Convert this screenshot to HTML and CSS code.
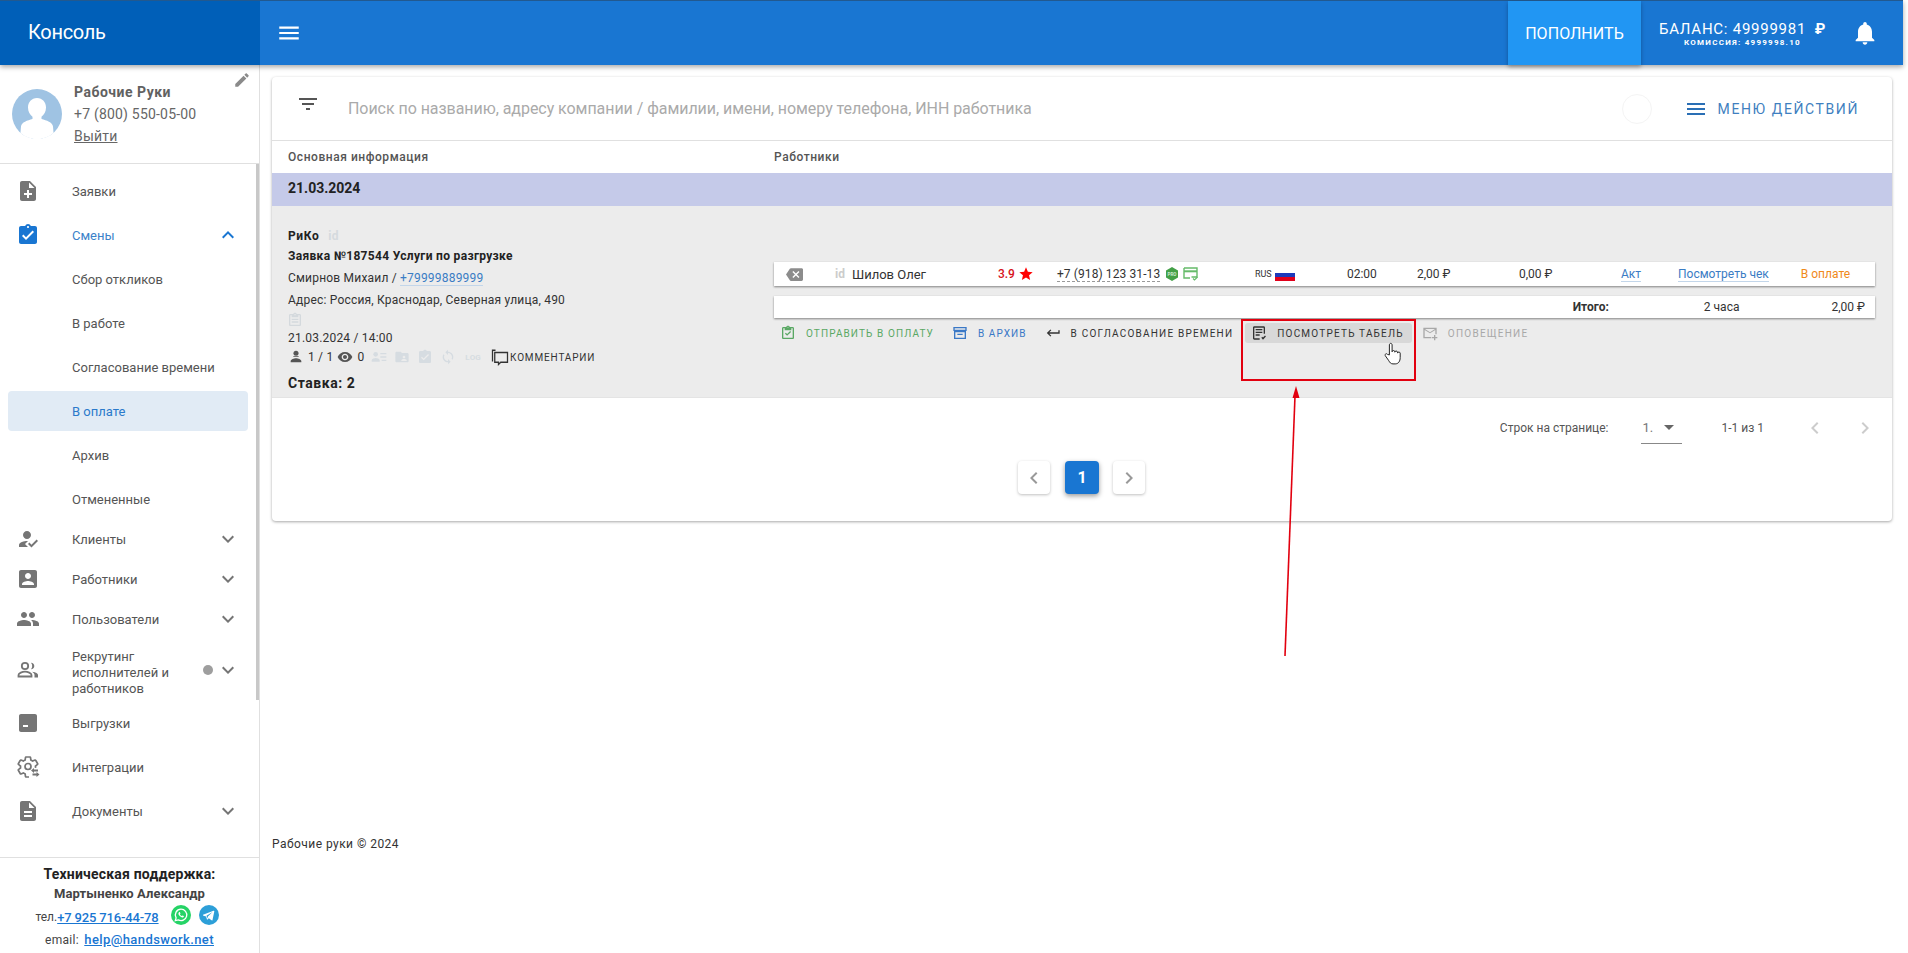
FILE: index.html
```html
<!DOCTYPE html>
<html lang="ru">
<head>
<meta charset="utf-8">
<title>Консоль</title>
<link rel="stylesheet" href="styles.css">
</head>
<body>
<div class="app">
  <header class="topbar">
    <div class="brand">Консоль</div>
    <div class="bar">
      <svg class="ic burger" viewBox="0 0 24 24"><path d="M3 18h18v-2H3v2zm0-5h18v-2H3v2zm0-7v2h18V6H3z"/></svg>
      <div class="spacer"></div>
      <button class="topup">ПОПОЛНИТЬ</button>
      <div class="balance">
        <div class="bal-main">БАЛАНС: 49999981 <span class="rub">₽</span></div>
        <div class="bal-sub">КОМИССИЯ: 4999998.10</div>
      </div>
      <svg class="ic bell" viewBox="0 0 24 24"><path d="M12 22c1.1 0 2-.9 2-2h-4c0 1.1.89 2 2 2zm6-6v-5c0-3.07-1.64-5.64-4.5-6.32V4c0-.83-.67-1.5-1.5-1.5s-1.5.67-1.5 1.5v.68C7.63 5.36 6 7.92 6 11v5l-2 2v1h16v-1l-2-2z"/></svg>
    </div>
  </header>
  <div class="body">
    <aside class="sidebar">
      <div class="profile">
        <svg class="avatar" viewBox="0 0 50 50"><circle cx="25" cy="25" r="25" fill="#9fc3e3"/><path d="M25 9c5.5 0 9 4.300 9 9.500 0 4-2 7.500-4.500 9.200v2.300c5 1.500 11 3 11.500 7.500 .2 2.500 .5 5 .5 6.500a25 25 0 0 1-33 0c0-1.500 .3-4 .5-6.500 .5-4.500 6.500-6 11.500-7.500v-2.300C18 26 16 22.500 16 18.500 16 13.300 19.500 9 25 9z" fill="#fff"/></svg>
        <div class="p-info">
          <div class="p-name">Рабочие Руки</div>
          <div class="p-phone">+7 (800) 550-05-00</div>
          <a class="p-exit">Выйти</a>
        </div>
        <svg class="ic p-edit" viewBox="0 0 24 24"><path d="M3 17.250V21h3.750L17.810 9.940l-3.750-3.750L3 17.250zM20.710 7.040c.39-.39.39-1.020 0-1.410l-2.340-2.340c-.39-.39-1.020-.39-1.410 0l-1.830 1.830 3.750 3.750 1.830-1.830z"/></svg>
      </div>
      <nav class="nav">
        <div class="item"><svg class="ic n-ic" viewBox="0 0 24 24"><path d="M14 2H6c-1.100 0-1.990.9-1.990 2L4 20c0 1.100.89 2 1.990 2H18c1.100 0 2-.9 2-2V8l-6-6zm2 14h-3v3h-2v-3H8v-2h3v-3h2v3h3v2zm-3-7V3.500L18.500 9H13z"/></svg><span>Заявки</span></div>
        <div class="item on"><svg class="ic n-ic" viewBox="0 0 24 24"><path d="M19 3h-4.180C14.400 1.840 13.300 1 12 1c-1.300 0-2.400.84-2.820 2H5c-1.100 0-2 .9-2 2v14c0 1.100.9 2 2 2h14c1.100 0 2-.9 2-2V5c0-1.100-.9-2-2-2zm-7 0c.55 0 1 .45 1 1s-.45 1-1 1-1-.45-1-1 .45-1 1-1zm-2 14l-4-4 1.410-1.410L10 14.170l6.590-6.590L18 9l-8 8z"/></svg><span>Смены</span><svg class="ic chev" viewBox="0 0 24 24"><path d="M12 8l-6 6 1.410 1.410L12 10.830l4.590 4.580L18 14z"/></svg></div>
        <div class="item sub"><span>Сбор откликов</span></div>
        <div class="item sub"><span>В работе</span></div>
        <div class="item sub"><span>Согласование времени</span></div>
        <div class="item sub active"><span>В оплате</span></div>
        <div class="item sub"><span>Архив</span></div>
        <div class="item sub"><span>Отмененные</span></div>
        <div class="item short first"><svg class="ic n-ic" viewBox="0 0 24 24"><path d="M9 17l3-2.940c-.39-.04-.68-.06-1-.06-2.670 0-8 1.340-8 4v2h9l-3-3zm2-5c2.210 0 4-1.800 4-4 0-2.210-1.790-4-4-4s-4 1.790-4 4c0 2.200 1.790 4 4 4zm4.470 8.500L12 17l1.400-1.410 2.070 2.080 5.130-5.170 1.400 1.410z"/></svg><span>Клиенты</span><svg class="ic chev" viewBox="0 0 24 24"><path d="M7.410 8.590L12 13.170l4.590-4.580L18 10l-6 6-6-6z"/></svg></div>
        <div class="item short"><svg class="ic n-ic" viewBox="0 0 24 24"><path d="M3 5v14c0 1.100.89 2 2 2h14c1.100 0 2-.9 2-2V5c0-1.100-.9-2-2-2H5c-1.110 0-2 .9-2 2zm12 4c0 1.660-1.340 3-3 3s-3-1.340-3-3 1.340-3 3-3 3 1.340 3 3zm-9 8c0-2 4-3.100 6-3.100s6 1.100 6 3.100v1H6v-1z"/></svg><span>Работники</span><svg class="ic chev" viewBox="0 0 24 24"><path d="M7.410 8.590L12 13.170l4.590-4.580L18 10l-6 6-6-6z"/></svg></div>
        <div class="item short"><svg class="ic n-ic" viewBox="0 0 24 24"><path d="M16 11c1.660 0 2.990-1.340 2.990-3S17.660 5 16 5c-1.660 0-3 1.340-3 3s1.340 3 3 3zm-8 0c1.660 0 2.990-1.340 2.990-3S9.660 5 8 5C6.340 5 5 6.340 5 8s1.340 3 3 3zm0 2c-2.330 0-7 1.170-7 3.500V19h14v-2.500c0-2.330-4.670-3.500-7-3.500zm8 0c-.29 0-.62.02-.97.05 1.160.84 1.970 1.970 1.970 3.450V19h6v-2.500c0-2.330-4.670-3.500-7-3.500z"/></svg><span>Пользователи</span><svg class="ic chev" viewBox="0 0 24 24"><path d="M7.410 8.590L12 13.170l4.590-4.580L18 10l-6 6-6-6z"/></svg></div>
        <div class="item tall"><svg class="ic n-ic" viewBox="0 0 24 24"><circle cx="9" cy="8" r="3.200" fill="none" stroke="#757575" stroke-width="1.800"/><path d="M15 4.800c2 0 3.300 1.400 3.300 3.200s-1.300 3.200-3.300 3.200c.8-1 1.200-2 1.200-3.200s-.4-2.200-1.200-3.200z"/><path d="M2.500 18.500v-1.500c0-2 4-3.300 6.500-3.300s6.500 1.300 6.500 3.300v1.500z" fill="none" stroke="#757575" stroke-width="1.800"/><path d="M16 13.700c2.800.3 6 1.300 6 3.300v2.400h-3.500V17c0-1.300-1-2.400-2.500-3.300z"/></svg><span class="wrap">Рекрутинг исполнителей и работников</span><i class="dot"></i><svg class="ic chev" viewBox="0 0 24 24"><path d="M7.410 8.590L12 13.170l4.590-4.580L18 10l-6 6-6-6z"/></svg></div>
        <div class="item"><svg class="ic n-ic" viewBox="0 0 24 24"><path d="M5 3h14c1.100 0 2 .9 2 2v14c0 1.100-.9 2-2 2H5c-1.100 0-2-.9-2-2V5c0-1.100.9-2 2-2zm2 11v2h5v-2H7z" fill-rule="evenodd"/></svg><span>Выгрузки</span></div>
        <div class="item"><svg class="ic n-ic" viewBox="0 0 24 24"><path fill="none" stroke="#757575" stroke-width="1.700" d="M19.430 12.980c.04-.32.07-.64.07-.98 0-.34-.03-.66-.07-.98l2.110-1.650c.19-.15.24-.42.12-.64l-2-3.460c-.12-.22-.39-.3-.61-.22l-2.490 1c-.52-.4-1.080-.73-1.690-.98l-.38-2.650C14.460 2.180 14.250 2 14 2h-4c-.25 0-.46.18-.49.42l-.38 2.650c-.61.25-1.170.59-1.690.98l-2.490-1c-.23-.09-.49 0-.61.22l-2 3.460c-.13.22-.07.49.12.64l2.110 1.650c-.04.32-.07.65-.07.98 0 .33.03.66.07.98l-2.110 1.650c-.19.15-.24.42-.12.64l2 3.460c.12.22.39.3.61.22l2.490-1c.52.4 1.080.73 1.690.98l.38 2.650c.03.24.24.42.49.42h3"/><circle cx="12" cy="11.500" r="3" fill="none" stroke="#757575" stroke-width="1.700"/><path d="M15 15.500l3-2.500v1.600h4v1.800h-4V18zM23.500 19.500l-3 2.500v-1.600h-4v-1.800h4V17z"/></svg><span>Интеграции</span></div>
        <div class="item"><svg class="ic n-ic" viewBox="0 0 24 24"><path d="M14 2H6c-1.100 0-1.990.9-1.990 2L4 20c0 1.100.89 2 1.990 2H18c1.100 0 2-.9 2-2V8l-6-6zm2 16H8v-2h8v2zm0-4H8v-2h8v2zm-3-5V3.500L18.500 9H13z"/></svg><span>Документы</span><svg class="ic chev" viewBox="0 0 24 24"><path d="M7.410 8.590L12 13.170l4.590-4.580L18 10l-6 6-6-6z"/></svg></div>
        <div class="thumb"></div>
      </nav>
      <div class="support">
        <div class="s-title">Техническая поддержка:</div>
        <div class="s-name">Мартыненко Александр</div>
        <div class="s-tel">тел.<a class="s-link">+7 925 716-44-78</a>
          <svg class="s-ic" viewBox="0 0 20 20"><circle cx="10" cy="10" r="10" fill="#25d366"/><path d="M10 4.200a5.700 5.700 0 0 0-4.900 8.600l-.8 2.900 3-.8A5.700 5.700 0 1 0 10 4.200z" fill="none" stroke="#fff" stroke-width="1.300"/><path d="M8 7.300c-.9.800-.7 2.100.3 3.300s2.400 2.200 3.500 1.900c.9-.2 1.300-1.100 1-1.400l-1.300-.7-.7.700c-.8-.3-1.500-1-1.900-1.900l.6-.7-.6-1.300c-.2-.2-.6-.1-.9.100z" fill="#fff"/></svg>
          <svg class="s-ic" viewBox="0 0 20 20"><circle cx="10" cy="10" r="10" fill="#2d9fd8"/><path d="M4 9.800l10.500-4.100c.5-.2.900.1.800.8l-1.800 8.400c-.1.600-.5.700-1 .4l-2.700-2-1.300 1.300c-.2.200-.4.200-.5-.1l-.9-3-2.600-.8c-.6-.2-.6-.6-.5-.7zm3.500 1 6-3.700-4.600 4.400-.3 2z" fill="#fff" fill-rule="evenodd"/></svg>
        </div>
        <div class="s-mail">email: <a class="s-link">help@handswork.net</a></div>
      </div>
    </aside>
    <main class="main">
      <section class="card">
        <div class="search">
          <svg class="ic f-ic" viewBox="0 0 24 24"><path d="M10 18h4v-2h-4v2zM3 6v2h18V6H3zm3 7h12v-2H6v2z"/></svg>
          <div class="placeholder">Поиск по названию, адресу компании / фамилии, имени, номеру телефона, ИНН работника</div>
          <div class="ghost"></div>
          <div class="action-menu">
            <svg class="ic" viewBox="0 0 24 24"><path d="M3 18h18v-2H3v2zm0-5h18v-2H3v2zm0-7v2h18V6H3z"/></svg>
            <span>МЕНЮ ДЕЙСТВИЙ</span>
          </div>
        </div>
        <div class="heads"><div class="h-left">Основная информация</div><div>Работники</div></div>
        <div class="date-row">21.03.2024</div>
        <div class="group">
          <div class="g-left">
            <div class="g-co"><b>РиКо</b><span class="g-id">id</span></div>
            <div class="g-order">Заявка №187544 Услуги по разгрузке</div>
            <div class="g-line">Смирнов Михаил / <a class="g-tel">+79999889999</a></div>
            <div class="g-line">Адрес: Россия, Краснодар, Северная улица, 490</div>
            <svg class="g-clip" viewBox="0 0 24 24"><path d="M19 3h-4.180C14.400 1.840 13.300 1 12 1c-1.300 0-2.400.84-2.820 2H5c-1.100 0-2 .9-2 2v14c0 1.100.9 2 2 2h14c1.100 0 2-.9 2-2V5c0-1.100-.9-2-2-2zm-7 0c.55 0 1 .45 1 1s-.45 1-1 1-1-.45-1-1 .45-1 1-1zm7 16H5V5h2v3h10V5h2v14zM7 10h10v2H7zm0 4h10v2H7z"/></svg>
            <div class="g-line g-when">21.03.2024 / 14:00</div>
            <div class="g-icons">
              <svg class="mi dark" viewBox="0 0 24 24"><circle cx="12" cy="6.500" r="3.800"/><path d="M8 10.500h8v1H8zM4 20v-2c0-2.800 5-4.300 8-4.300s8 1.500 8 4.300v2z"/></svg>
              <span>1 / 1</span>
              <svg class="mi dark" viewBox="0 0 24 24"><path d="M12 4.500C7 4.500 2.730 7.610 1 12c1.730 4.390 6 7.500 11 7.500s9.270-3.110 11-7.500c-1.730-4.390-6-7.500-11-7.500zM12 17c-2.760 0-5-2.240-5-5s2.240-5 5-5 5 2.240 5 5-2.240 5-5 5zm0-8c-1.660 0-3 1.340-3 3s1.340 3 3 3 3-1.340 3-3-1.340-3-3-3z"/></svg>
              <span>0</span>
              <svg class="mi faint" viewBox="0 0 24 24"><circle cx="7" cy="8" r="3.500"/><path d="M1 19v-2c0-2.500 4-3.500 6-3.500s6 1 6 3.500v2zM14 6h9v2h-9zM14 11h9v2h-9zM16 16h7v2h-7z"/></svg>
              <svg class="mi faint" viewBox="0 0 24 24"><path d="M10 4H4c-1.100 0-2 .9-2 2v12c0 1.100.9 2 2 2h16c1.100 0 2-.9 2-2V8c0-1.100-.9-2-2-2h-8l-2-2zm5 6c1.100 0 2 .9 2 2s-.9 2-2 2-2-.9-2-2 .9-2 2-2zm-4 7c0-1.300 2.700-2 4-2s4 .7 4 2v1h-8z" fill-rule="evenodd"/></svg>
              <svg class="mi faint" viewBox="0 0 24 24"><path d="M19 3h-4.180C14.400 1.840 13.300 1 12 1c-1.300 0-2.400.84-2.820 2H5c-1.100 0-2 .9-2 2v14c0 1.100.9 2 2 2h14c1.100 0 2-.9 2-2V5c0-1.100-.9-2-2-2zm-9 14l-4-4 1.410-1.410L10 14.170l6.590-6.590L18 9l-8 8z"/></svg>
              <svg class="mi faint" viewBox="0 0 24 24"><path d="M12 4V1L8 5l4 4V6c3.310 0 6 2.690 6 6 0 1.010-.25 1.970-.7 2.800l1.460 1.460C19.540 15.030 20 13.570 20 12c0-4.420-3.580-8-8-8zm0 14c-3.310 0-6-2.690-6-6 0-1.010.25-1.970.7-2.800L5.240 7.740C4.460 8.970 4 10.430 4 12c0 4.420 3.580 8 8 8v3l4-4-4-4v3z"/></svg>
              <span class="g-log">LOG</span>
              <svg class="mi comm" viewBox="0 0 24 24"><path d="M6 3H2v15" fill="none" stroke="#333" stroke-width="1.700"/><path d="M5 6h17v13h-9l-3 3v-3H5z" fill="none" stroke="#333" stroke-width="1.700"/></svg>
              <span class="g-comm">КОММЕНТАРИИ</span>
            </div>
            <div class="g-rate">Ставка: 2</div>
          </div>
          <div class="g-right">
            <div class="worker">
              <svg class="w-back" viewBox="0 0 24 24"><path d="M22 3H7c-.69 0-1.230.35-1.590.88L0 12l5.410 8.110c.36.53.9.89 1.590.89h15c1.100 0 2-.9 2-2V5c0-1.100-.9-2-2-2zm-3 12.590L17.590 17 14 13.410 10.410 17 9 15.590 12.590 12 9 8.410 10.410 7 14 10.590 17.590 7 19 8.410 15.410 12 19 15.590z"/></svg>
              <span class="w-id">id</span>
              <span class="w-name">Шилов Олег</span>
              <span class="w-rate">3.9 <svg class="w-star" viewBox="0 0 24 24"><path d="M12 17.270L18.180 21l-1.640-7.030L22 9.240l-7.190-.61L12 2 9.190 8.630 2 9.240l5.460 4.730L5.820 21z"/></svg></span>
              <span class="w-tel"><span class="w-dash">+7 (918) 123 31-13</span>
                <svg class="w-pro" viewBox="0 0 14 14"><path d="M7 0l6 3.500v7L7 14l-6-3.500v-7z" fill="#43a047"/><text x="7" y="8.800" class="w-pro-t">PRO</text></svg>
                <svg class="w-card" viewBox="0 0 16 14"><path d="M1 1h13v9H8.500M1 1v10h6" fill="none" stroke="#66bb6a" stroke-width="1.400"/><rect x="1" y="3.300" width="13" height="2" fill="#66bb6a"/><path d="M10 11.500l1.500 1.500 3-3" fill="none" stroke="#66bb6a" stroke-width="1.100"/></svg>
              </span>
              <span class="w-rus">RUS<i class="flag"></i></span>
              <span class="w-time">02:00</span>
              <span class="w-sum">2,00 ₽</span>
              <span class="w-zero">0,00 ₽</span>
              <a class="w-link w-act">Акт</a>
              <a class="w-link w-check">Посмотреть чек</a>
              <span class="w-status">В оплате</span>
            </div>
            <div class="total">
              <b>Итого:</b><span class="t-h">2 часа</span><span class="t-s">2,00 ₽</span>
            </div>
            <div class="actions">
              <div class="act green"><svg class="a-ic" viewBox="0 0 24 24"><path d="M19 3h-4.180C14.400 1.840 13.300 1 12 1c-1.300 0-2.400.84-2.820 2H5c-1.100 0-2 .9-2 2v14c0 1.100.9 2 2 2h14c1.100 0 2-.9 2-2V5c0-1.100-.9-2-2-2zm-7-.25c.41 0 .75.34.75.75s-.34.75-.75.75-.75-.34-.75-.75.34-.75.75-.75zM19 19H5V5h2v3h10V5h2v14zm-2.400-8.500l-1.400-1.400-4.500 4.500-1.900-1.900L7.400 13l3.300 3.300z"/></svg>Отправить в оплату</div>
              <div class="act blue"><svg class="a-ic" viewBox="0 0 24 24"><path d="M2 3h20v6H2zm2 2v2h16V5zM3 9h18v12H3zm2 2v8h14v-8zm3 2h8v2H8z" fill-rule="evenodd"/></svg>В архив</div>
              <div class="act dark"><svg class="a-ic" viewBox="0 0 24 24"><path d="M22 8v5H6.500l3 3-1.400 1.400L2.700 12l5.400-5.400 1.400 1.400-3 3H20V8z"/></svg>В согласование времени</div>
              <div class="act dark hover"><svg class="a-ic" viewBox="0 0 24 24"><path d="M5 2h14c1.100 0 2 .9 2 2v9h-2V4H5v16h8v2H5c-1.100 0-2-.9-2-2V4c0-1.100.9-2 2-2zm2 4h10v2H7zm0 4h10v2H7zm0 4h6v2H7zm8.500 5l1.400-1.400 1.100 1.100 3-3 1.400 1.400L18 22.100z"/></svg>Посмотреть табель</div>
              <div class="act mute"><svg class="a-ic" viewBox="0 0 24 24"><path d="M2 4h20v10h-2V7.500l-8 5-8-5V18h10v2H2zm2.500 2l7.500 4.700L19.500 6zM18 15h2v3h3v2h-3v3h-2v-3h-3v-2h3z" fill-rule="evenodd"/></svg>Оповещение</div>
            </div>
          </div>
        </div>
        <div class="pager">
          <span class="pg-label">Строк на странице:</span>
          <span class="pg-select"><span>1.</span><i class="caret"></i></span>
          <span class="pg-range">1-1 из 1</span>
          <svg class="ic pg-nav" viewBox="0 0 24 24"><path d="M15.410 7.410L14 6l-6 6 6 6 1.410-1.410L10.830 12z"/></svg>
          <svg class="ic pg-nav" viewBox="0 0 24 24"><path d="M10 6L8.590 7.410 13.170 12l-4.580 4.590L10 18l6-6z"/></svg>
        </div>
        <div class="pages">
          <button class="pg-btn"><svg class="ic" viewBox="0 0 24 24"><path d="M15.410 7.410L14 6l-6 6 6 6 1.410-1.410L10.830 12z"/></svg></button>
          <button class="pg-btn cur">1</button>
          <button class="pg-btn"><svg class="ic" viewBox="0 0 24 24"><path d="M10 6L8.590 7.410 13.170 12l-4.580 4.590L10 18l6-6z"/></svg></button>
        </div>
      </section>
      <footer class="foot">Рабочие руки © 2024</footer>
    </main>
  </div>
  <div class="note-box"></div>
  <svg class="note-arrow" viewBox="0 0 30 280"><path d="M4 272L14 12" stroke="#e2000f" stroke-width="1.600" fill="none"/><path d="M15 2l-3.500 12h7z" fill="#e2000f"/></svg>
  <svg class="note-hand" viewBox="0 0 20 26"><path d="M6 14V3c0-2.400 3-2.400 3 0v7.500c0-1.800 3-1.800 3 0v.5c0-1.700 3-1.700 3 0v1c0-1.500 3-1.500 3 0v5c0 4-2 7-5.500 7H10c-2.500 0-3.500-1.500-5-4L1.500 15c-1-1.800 1.300-3.300 2.500-1.500z" fill="#fff" stroke="#222" stroke-width="1.100"/></svg>
</div>
</body>
</html>
```

FILE: styles.css
```css
* { box-sizing: border-box; }
html, body { margin: 0; height: 953px; overflow: hidden; background: #fff; }
body { font-family: Roboto, "Liberation Sans", sans-serif; color: #333; }
.app { position: relative; height: 953px; display: flex; flex-direction: column; padding-right: 5px; }
.ic { width: 24px; height: 24px; fill: currentColor; flex: none; display: block; }

.topbar { height: 65px; flex: none; display: flex; border-top: 1px solid #22598f; box-shadow: 0 2px 5px rgba(0,0,0,.35); position: relative; z-index: 2; color: #fff; }
.brand { width: 260px; background: #005fb8; font-size: 20px; letter-spacing: -.3px; padding-left: 28px; line-height: 63px; }
.bar { flex: 1; background: #1976d2; display: flex; align-items: center; padding-left: 16px; }
.burger { width: 26px; height: 26px; }
.spacer { flex: 1; }
.topup { width: 133px; height: 64px; border: 0; background: #2196f3; color: #fff; font: 16px Roboto, sans-serif; letter-spacing: .05px; box-shadow: 0 2px 4px rgba(0,0,0,.3); }
.balance { width: 212px; padding-left: 18px; }
.bal-main { font-size: 15px; letter-spacing: .75px; line-height: 18px; white-space: nowrap; }
.rub { font-weight: 700; margin-left: 4px; }
.bal-sub { font-size: 8px; font-weight: 700; letter-spacing: 1.25px; line-height: 9px; padding-left: 25px; white-space: nowrap; }
.bell { width: 28px; height: 28px; margin-right: 24px; margin-left: -2px; }

.body { flex: 1; display: flex; min-height: 0; }
.sidebar { width: 260px; flex: none; display: flex; flex-direction: column; border-right: 1px solid #e0e0e0; }
.profile { height: 99px; flex: none; border-bottom: 1px solid #e0e0e0; display: flex; padding: 24px 0 0 12px; position: relative; font-size: 14px; letter-spacing: .2px; color: #666; }
.avatar { width: 50px; height: 50px; flex: none; }
.p-info { margin-left: 12px; line-height: 22px; margin-top: -8px; }
.p-name { font-weight: 700; letter-spacing: .5px; color: #616161; }
.p-exit { text-decoration: underline; }
.p-edit { position: absolute; right: 8px; top: 6px; width: 18px; height: 18px; color: #8a8a8a; }

.nav { flex: 1; position: relative; overflow: hidden; padding-top: 5px; padding-right: 3px; }
.item { height: 44px; display: flex; align-items: center; padding-left: 16px; font-size: 13px; color: #555; position: relative; }
.item.short { height: 40px; }
.item.first { margin-top: -2px; }
.item.tall { height: 62px; line-height: 16px; }
.item > span { margin-left: 32px; }
.item.sub > span { margin-left: 56px; }
.n-ic { color: #757575; }
.item .wrap { width: 110px; margin-top: 5px; }
.chev { position: absolute; left: 216px; top: 50%; margin-top: -12px; color: #757575; }
.on, .on .n-ic, .on .chev { color: #1976d2; }
.on span { color: #3b82c9; }
.sub.active { margin: 2px 8px; padding-left: 8px; height: 40px; background: #e1ebf5; border-radius: 4px; color: #2b7acb; }
.dot { position: absolute; left: 203px; top: 50%; margin-top: -5px; width: 10px; height: 10px; border-radius: 50%; background: #9e9e9e; }
.thumb { position: absolute; right: 0; top: 0; width: 3px; height: 536px; background: #c8c8c8; }

.support { height: 96px; flex: none; border-top: 1px solid #e0e0e0; text-align: center; font-size: 12px; letter-spacing: .5px; color: #444; padding-top: 7px; }
.s-title { font-size: 14px; font-weight: 700; color: #222; letter-spacing: .2px; line-height: 18px; }
.s-name { font-weight: 700; font-size: 13px; line-height: 22px; color: #444; letter-spacing: .1px; }
.s-tel { display: flex; align-items: center; justify-content: center; height: 22px; margin-top: 1px; letter-spacing: 0; padding-left: 3px; }
.s-link { color: #1976d2; text-decoration: underline; font-weight: 500; }
.s-tel .s-link { font-size: 13px; margin-right: 12px; letter-spacing: -.15px; }
.s-ic { width: 20px; height: 20px; margin-right: 8px; margin-top: -4px; }
.s-mail { line-height: 24px; letter-spacing: .3px; }
.s-mail .s-link { font-size: 13px; margin-left: 2px; letter-spacing: .4px; }

.main { flex: 1; padding: 12px 11px 0 12px; display: flex; flex-direction: column; min-width: 0; }
.card { height: 444px; flex: none; border-radius: 4px; box-shadow: 0 1px 3px rgba(0,0,0,.35); background: #fff; }
.search { height: 64px; display: flex; align-items: center; padding-left: 24px; border-bottom: 1px solid #e0e0e0; position: relative; }
.f-ic { color: #555; margin-top: -10px; }
.placeholder { margin-left: 28px; font-size: 16px; letter-spacing: -.05px; color: #aaa; flex: 1; white-space: nowrap; }
.ghost { width: 30px; height: 30px; border-radius: 50%; border: 1px solid #f4f4f4; margin-right: 32px; }
.action-menu { display: flex; align-items: center; gap: 10px; margin-right: 33px; color: #3f7fc0; font-size: 14px; letter-spacing: 1.6px; }
.action-menu .ic { color: #2a6fb5; }

.heads { height: 32px; display: flex; align-items: center; padding-left: 16px; font-size: 12px; font-weight: 500; letter-spacing: .55px; color: #555; }
.h-left { width: 486px; }
.date-row { height: 33px; background: #c5cae9; padding-left: 16px; font-size: 14px; font-weight: 700; line-height: 30px; color: #222; }
.group { height: 192px; background: #ececec; display: flex; border-bottom: 1px solid #e4e4e4; }
.g-left { width: 502px; flex: none; padding: 21px 0 0 16px; font-size: 12px; letter-spacing: .2px; color: #333; }
.g-co { line-height: 18px; color: #222; }
.g-co b { font-weight: 700; letter-spacing: .6px; }
.g-id { margin-left: 9px; color: #d5dade; font-weight: 700; }
.g-order { font-weight: 700; line-height: 22px; color: #222; letter-spacing: .32px; }
.g-line { line-height: 22px; }
.g-tel { color: #3a7cc4; border-bottom: 1px solid #c3d6ea; }
.g-clip { display: block; width: 16px; height: 16px; fill: #d4d9dd; margin: 1px 0 1px -1px; }
.g-when { line-height: 19px; margin-top: 1px; }
.g-icons { display: flex; align-items: center; height: 18px; gap: 4px; }
.mi { width: 16px; height: 16px; flex: none; }
.mi.dark { fill: #555; }
.mi.faint { fill: #d6dce1; margin-left: 3px; }
.g-icons > span { white-space: nowrap; }
.g-log { font-size: 8px; font-weight: 700; color: #d6dce1; margin: 0 6px 0 5px; }
.mi.comm { width: 18px; height: 18px; }
.g-comm { font-size: 10px; letter-spacing: .85px; margin-left: -3px; color: #333; }
.g-rate { font-size: 14px; font-weight: 700; letter-spacing: .55px; margin-top: 8px; color: #222; line-height: 18px; }

.g-right { flex: 1; padding: 56px 17px 0 0; min-width: 0; }
.worker { height: 24px; background: #fff; box-shadow: 0 1px 2px rgba(0,0,0,.45); display: flex; align-items: center; font-size: 12px; color: #333; position: relative; white-space: nowrap; }
.w-back { width: 17px; height: 17px; fill: #8c8c8c; margin-left: 12px; flex: none; }
.w-id { margin-left: 32px; color: #ccc; font-weight: 700; }
.w-name { margin-left: 7px; width: 146px; font-size: 13px; }
.w-rate { width: 59px; color: #d6121a; font-weight: 500; display: flex; align-items: center; gap: 3px; }
.w-star { width: 16px; height: 16px; fill: #f00; }
.w-tel { width: 198px; display: flex; align-items: center; gap: 5px; }
.w-dash { border-bottom: 1px dashed #999; font-size: 12px; letter-spacing: .1px; line-height: 14px; }
.w-pro { width: 14px; height: 14px; }
.w-pro-t { font: 700 4.500px Roboto, sans-serif; fill: #cfe8d0; text-anchor: middle; }
.w-card { width: 16px; height: 14px; margin-left: -1px; }
.w-rus { width: 92px; font-size: 9px; display: flex; align-items: center; gap: 3px; }
.flag { width: 20px; height: 12px; margin-top: 2px; background: linear-gradient(#fff 0 33%, #1c39bb 33% 66%, #e0001b 66%); }
.w-time { width: 70px; }
.w-sum { width: 102px; }
.w-zero { width: 102px; }
.w-link { color: #3a7cc4; border-bottom: 1px solid #c3d6ea; }
.w-act { margin-right: 37px; }
.w-check { margin-right: 32px; }
.w-status { color: #f0891a; }

.total { height: 22px; margin-top: 10px; background: #fff; box-shadow: 0 1px 2px rgba(0,0,0,.45); display: flex; align-items: center; justify-content: flex-end; font-size: 12px; color: #333; padding-right: 10px; }
.total b { font-weight: 700; margin-right: 95px; }
.t-h { margin-right: 92px; }
.actions { display: flex; align-items: center; margin-top: 5px; height: 20px; }
.act { height: 20px; display: flex; align-items: center; gap: 10px; padding: 0 8px 0 6px; margin-right: 4px; border-radius: 3px; font-size: 10px; letter-spacing: 1.1px; text-transform: uppercase; white-space: nowrap; }
.a-ic { width: 16px; height: 16px; flex: none; fill: currentColor; }
.act.green { color: #5aa864; }
.act.blue { color: #3a78c6; }
.act.dark { color: #333; letter-spacing: 1.2px; }
.act.hover { background: #d8d8d8; }
.act.mute { color: #a8a8a8; letter-spacing: 1.25px; }

.pager { height: 63px; display: flex; align-items: center; justify-content: flex-end; font-size: 12px; color: #555; padding: 0 15px 4px 0; }
.pg-select { width: 41px; height: 32px; margin-left: 33px; display: flex; align-items: center; justify-content: space-between; padding: 0 8px 0 1px; border-bottom: 1px solid #888; font-size: 13px; color: #777; margin-top: 1px; }
.caret { border: 5px solid transparent; border-top: 5px solid #666; margin-top: 5px; }
.pg-range { margin: 0 39px; }
.pg-nav { color: #ccc; margin-left: 26px; }
.pg-nav:first-of-type { margin-left: 0; }
.pages { display: flex; justify-content: center; gap: 14px; padding-right: 1px; }
.pg-btn { width: 32px; height: 33px; border: 0; border-radius: 4px; background: #fff; box-shadow: 0 1px 3px rgba(0,0,0,.25); color: #999; display: flex; align-items: center; justify-content: center; padding: 0; }
.pg-btn.cur { width: 34px; margin-left: 1px; background: #1976d2; color: #fff; font: 700 16px Roboto, sans-serif; box-shadow: 0 2px 5px rgba(0,0,0,.4); }
.foot { margin-top: 316px; font-size: 12px; letter-spacing: .45px; color: #333; }

.note-box { position: absolute; left: 1241px; top: 319px; width: 175px; height: 62px; border: 2px solid #e2000f; }
.note-arrow { position: absolute; left: 1281px; top: 384px; width: 30px; height: 280px; }
.note-hand { position: absolute; left: 1384px; top: 342px; width: 18px; height: 24px; }
```
